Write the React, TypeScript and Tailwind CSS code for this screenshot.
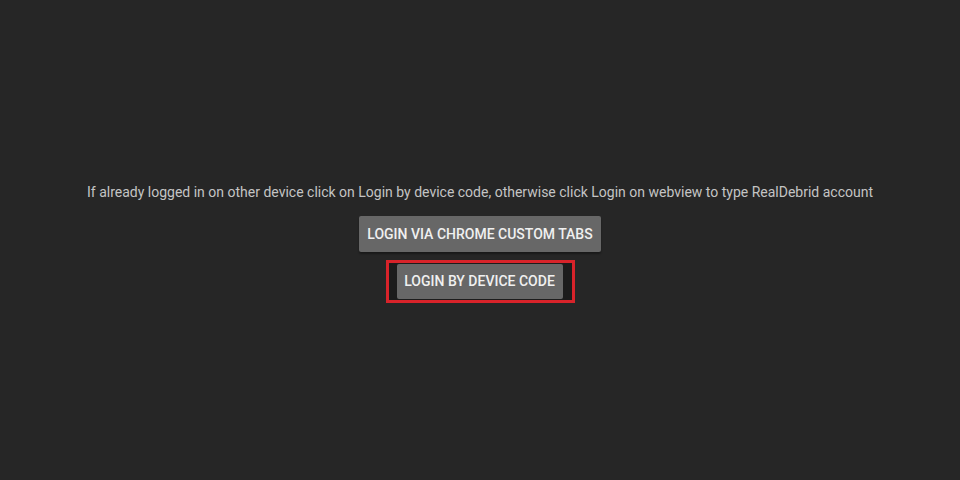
export default function App() {
  return (
    <div className="flex h-[480px] w-[960px] flex-col items-center bg-[#262626] pt-[183px] font-['Roboto',sans-serif]">
      <p className="text-[14px] leading-[18px] text-[#c4c4c4]">
        If already logged in on other device click on Login by device code, otherwise click Login on webview to type RealDebrid account
      </p>
      <button className="mt-[15px] h-[36px] w-[242px] rounded-[2px] bg-[#676767] text-[14px] font-medium uppercase text-[#f0f0f0] shadow-[0_2px_2px_rgba(0,0,0,0.35)]">
        Login via Chrome Custom Tabs
      </button>
      <div className="mt-[8px] flex h-[43px] w-[189px] items-center bg-[#1c1c1c] pl-[11px] ring-[3px] ring-inset ring-[#d8232a]">
        <button className="h-[35px] w-[166px] rounded-[2px] bg-[#676767] text-[14px] font-medium uppercase text-[#f0f0f0]">
          Login by Device Code
        </button>
      </div>
    </div>
  )
}
